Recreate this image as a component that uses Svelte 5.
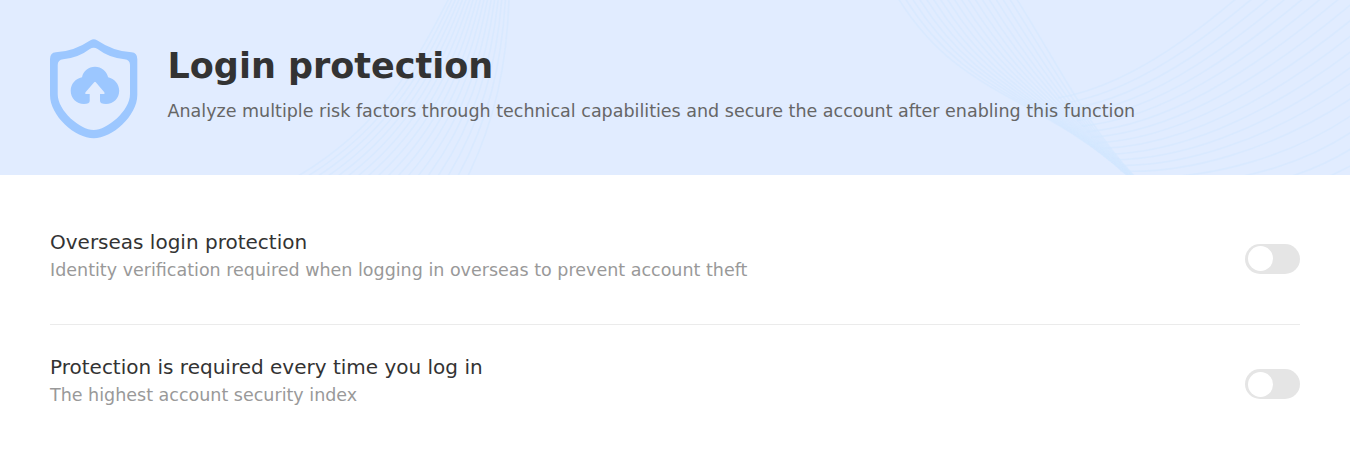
<script lang="ts">
  let settings = $state([
    {
      title: 'Overseas login protection',
      text: 'Identity verification required when logging in overseas to prevent account theft',
      on: false
    },
    {
      title: 'Protection is required every time you log in',
      text: 'The highest account security index',
      on: false
    }
  ]);

  // Blends two cubic curves into a family of evenly spaced ones.
  function family(from: number[], to: number[], count: number): string[] {
    return Array.from({ length: count }, (_, i) => {
      const t = i / (count - 1);
      const p = from.map((v, k) => (v + (to[k] - v) * t).toFixed(1));
      return `M${p[0]} ${p[1]}C${p.slice(2).join(' ')}`;
    });
  }

  const waves = [
    ...family([449, -2, 417, 62, 380, 128, 298, 176], [509, -2, 507, 65, 495, 120, 468, 176], 18),
    ...family([898, -2, 960, 98, 1035, 92, 1128, 176], [1016, -2, 1060, 68, 1090, 130, 1136, 178], 18),
    ...family([1058, 98, 1140, 84, 1220, 20, 1350, -105], [1120, 171, 1185, 174, 1270, 152, 1352, 98], 14),
    ...family([1146, 178, 1215, 177, 1290, 157, 1352, 115], [1290, 192, 1315, 184, 1335, 174, 1352, 165], 4)
  ];
</script>

<header class="banner">
  <svg class="waves" viewBox="0 0 1350 175" aria-hidden="true">
    {#each waves as d}
      <path {d} />
    {/each}
  </svg>
  <svg class="shield" viewBox="0 0 88 100" aria-hidden="true">
    <path
      fill="#9cc7ff"
      fill-rule="evenodd"
      d="M40.5 1.2Q43.7-.7 47 1.2Q64 12.6 81.5 13.2Q87.3 13.6 87.3 20V56C87.3 77 62 99.3 43.7 99.3C25.4 99.3 0 77 0 56V20Q0 13.6 5.8 13.2Q23.5 12.6 40.5 1.2ZM39.8 10Q43.7 7.6 47.6 10Q59 18.8 74.5 20.2Q80 20.7 80 26V55C80 72 57 91 43.7 91C30.4 91 7.7 72 7.7 55V26Q7.7 20.7 13.2 20.2Q28.5 18.8 39.8 10Z"
    />
    <path
      fill="#9cc7ff"
      d="M39.7 55V62Q39.7 65 34 65C26.5 65 20.7 59.3 20.7 51.7C20.7 45 25.5 39.4 32 38.2C33.2 32 38.4 27.8 45 27.8C51.4 27.8 56.7 32 58.1 38.2C64.3 39.4 69.2 45 69.2 51.7C69.2 59.3 63.5 65 56 65Q50 65 50 62V55H54Q55.2 54.6 54.3 53.2L45.8 43.2Q45 42.3 44.2 43.2L35.5 53.2Q34.6 54.6 35.8 55Z"
    />
  </svg>
  <div class="intro">
    <h1>Login protection</h1>
    <p>Analyze multiple risk factors through technical capabilities and secure the account after enabling this function</p>
  </div>
</header>

<main>
  {#each settings as item}
    <section>
      <div class="label">
        <h2>{item.title}</h2>
        <p>{item.text}</p>
      </div>
      <button
        class:on={item.on}
        role="switch"
        aria-checked={item.on}
        aria-label={item.title}
        onclick={() => (item.on = !item.on)}
      ><span></span></button>
    </section>
  {/each}
</main>

<style>
  :global(body) {
    margin: 0;
    background: #fff;
    font-family: 'DejaVu Sans', sans-serif;
  }

  h1, h2, p {
    margin: 0;
    font-weight: 400;
  }

  .banner {
    position: relative;
    display: flex;
    box-sizing: border-box;
    height: 175px;
    padding: 38.5px 50px 0;
    background: #e1ecff;
    overflow: hidden;
  }

  .waves {
    position: absolute;
    inset: 0;
    width: 1350px;
    height: 175px;
    fill: none;
    stroke: #d3e8ff;
    stroke-width: 1.6;
    stroke-opacity: 0.6;
  }

  .shield {
    position: relative;
    flex: none;
    width: 88px;
    height: 100px;
  }

  .intro {
    position: relative;
    margin-left: 29.5px;
    padding-top: 7.5px;
  }

  h1 {
    color: #333;
    font-size: 35px;
    font-weight: 700;
    line-height: 41px;
  }

  .intro p {
    margin-top: 14px;
    color: #666;
    font-size: 17.5px;
    line-height: 21px;
  }

  main {
    padding: 25px 50px 0;
  }

  section {
    display: flex;
    align-items: center;
    justify-content: space-between;
    box-sizing: border-box;
    height: 125px;
    padding: 9px 0 16px;
  }

  section:not(:last-child) {
    border-bottom: 1px solid #ebebeb;
  }

  .label {
    margin-bottom: 7px;
  }

  h2 {
    color: #333;
    font-size: 20px;
    line-height: 28px;
  }

  section p {
    margin-top: 1px;
    color: #999;
    font-size: 17.5px;
    line-height: 26px;
  }

  button {
    box-sizing: border-box;
    width: 55px;
    height: 30px;
    padding: 2.5px;
    border: 0;
    border-radius: 15px;
    background: #e5e5e5;
    cursor: pointer;
  }

  button span {
    display: block;
    width: 25px;
    height: 25px;
    border-radius: 50%;
    background: #fff;
  }

  button.on {
    background: #9cc7ff;
  }

  button.on span {
    margin-left: auto;
  }
</style>
